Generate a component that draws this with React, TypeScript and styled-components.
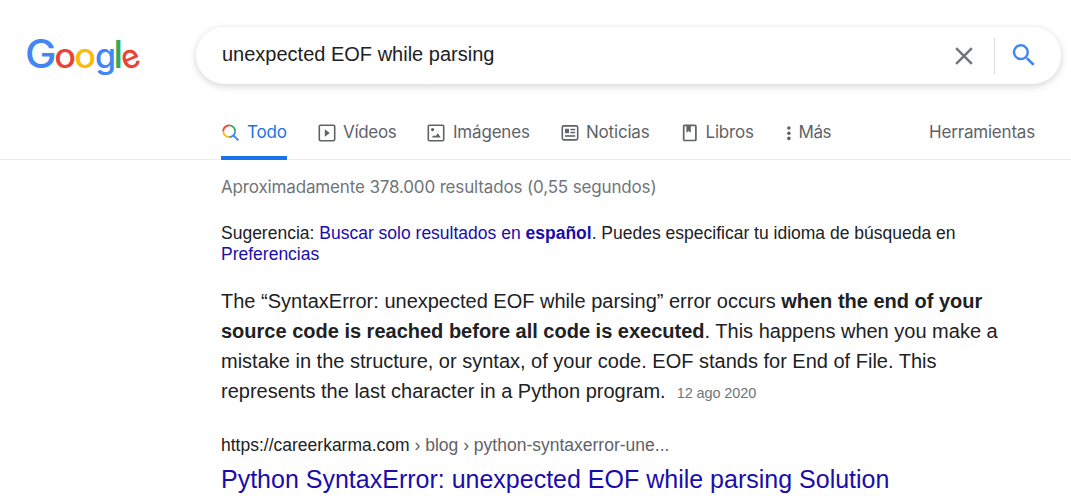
import React from 'react';
import styled, { createGlobalStyle, css } from 'styled-components';

const GlobalStyle = createGlobalStyle`
  * { box-sizing: border-box; }
  body {
    margin: 0;
    background: #fff;
    color: #202124;
    font-family: "Liberation Sans", Arial, sans-serif;
    overflow: hidden;
  }
`;

const Page = styled.div`
  width: 1071px;
  height: 496px;
  overflow: hidden;
`;

const Header = styled.header`
  height: 160px;
  border-bottom: 1px solid #ebebeb;
`;

const SearchRow = styled.div`
  display: flex;
  padding: 27px 10px 0 26px;
`;

const Logo = styled.svg`
  flex: none;
  width: 116px;
  height: 44px;
  margin: 7px 54px 0 0;
  overflow: visible;
  font-family: Inter, sans-serif;
`;

const SearchBox = styled.div`
  display: flex;
  align-items: center;
  flex: 1;
  height: 57px;
  padding: 0 22px 0 26px;
  border-radius: 29px;
  box-shadow: 0 2px 6px 1px rgba(64, 60, 67, 0.18);
  svg { flex: none; }
`;

const Query = styled.div`
  flex: 1;
  font-size: 20px;
  line-height: 24px;
  padding-bottom: 4px;
  color: #202124;
`;

const Divider = styled.div`
  width: 1px;
  height: 36px;
  margin: 0 14px 0 15.5px;
  background: #dadce0;
`;

const Tabs = styled.nav`
  display: flex;
  height: 60px;
  margin-top: 16px;
  padding: 0 36px 0 221px;
  font-family: Inter, sans-serif;
  font-size: 17px;
  line-height: 24px;
  color: #5f6368;
`;

const Tab = styled.div<{ $width: number; $gap: number; $spacing: number; $iconGap?: number; $active?: boolean }>`
  display: flex;
  align-items: flex-start;
  flex: none;
  width: ${p => p.$width}px;
  margin-right: ${p => p.$gap}px;
  padding-top: 20px;
  white-space: nowrap;
  letter-spacing: ${p => p.$spacing}px;
  svg { flex: none; margin: 4px ${p => p.$iconGap ?? 7}px 0 0; }
  ${p => p.$active && css`
    color: #1a73e8;
    border-bottom: 4px solid #1a73e8;
  `}
`;

const Tools = styled.div`
  margin-left: auto;
  padding-top: 20px;
  letter-spacing: -0.2px;
`;

const Results = styled.main`
  padding-left: 221px;
`;

const Stats = styled.div`
  padding-top: 15px;
  font-family: Inter, sans-serif;
  font-size: 17px;
  line-height: 24px;
  letter-spacing: -0.15px;
  color: #70757a;
`;

const Suggestion = styled.div`
  width: 760px;
  margin-top: 24px;
  font-size: 17.5px;
  line-height: 21px;
`;

const Link = styled.a`
  color: #1a0dab;
`;

const Snippet = styled.p`
  width: 800px;
  margin: 21px 0 0;
  font-size: 20px;
  line-height: 30px;
`;

const Line = styled.span`
  display: block;
  white-space: nowrap;
`;

const DateText = styled.span`
  margin-left: 11px;
  font-size: 14.5px;
  letter-spacing: -0.1px;
  color: #70757a;
`;

const Cite = styled.div`
  margin-top: 25px;
  font-size: 17.5px;
  line-height: 24px;
  span { color: #5f6368; }
`;

const Title = styled.h3`
  margin: 6px 0 0;
  font-size: 25px;
  line-height: 33px;
  font-weight: 400;
  color: #1a0dab;
  white-space: nowrap;
`;

const GoogleLogo = () => (
  <Logo viewBox="0 0 116 44" aria-label="Google">
    <g fontWeight="500" textAnchor="middle">
      <text fontSize="39" fill="#4285f4" transform="translate(14.8 34) scale(1.08 1)">G</text>
      <text fontSize="34" fontWeight="550" fill="#ea4335" transform="translate(39.2 34.2) scale(1.06 1)">o</text>
      <text fontSize="34" fontWeight="550" fill="#fbbc05" transform="translate(59.2 34.2) scale(1.06 1)">o</text>
      <text fontSize="34" fontWeight="550" fill="#4285f4" transform="translate(79.5 34.2)">g</text>
      <text fontSize="38" fontWeight="600" fill="#34a853" transform="translate(92.3 34) scale(.85 1)">l</text>
      <text y="9.1" fontSize="33" fontWeight="550" fill="#ea4335" transform="translate(104.5 24.8) rotate(-22) scale(.95 1)">e</text>
    </g>
  </Logo>
);

const CloseIcon = () => (
  <svg width="30" height="30" viewBox="0 0 24 24" fill="#70757a">
    <path d="M19 6.41L17.59 5 12 10.59 6.41 5 5 6.41 10.59 12 5 17.59 6.41 19 12 13.41 17.59 19 19 17.59 13.41 12z" />
  </svg>
);

const SearchIcon = () => (
  <svg width="30" height="30" viewBox="0 0 24 24" fill="#4285f4">
    <path transform="translate(0 -.6)" d="M15.5 14h-.79l-.28-.27A6.471 6.471 0 0 0 16 9.5 6.5 6.5 0 1 0 9.5 16c1.61 0 3.09-.59 4.23-1.57l.27.28v.79l5 4.99L20.49 19l-4.99-5zm-6 0C7.01 14 5 11.99 5 9.5S7.01 5 9.5 5 14 7.01 14 9.5 11.99 14 9.5 14z" />
  </svg>
);

const ColorSearchIcon = () => (
  <svg width="18" height="18" viewBox="0 0 18 18" fill="none" strokeWidth="1.8">
    <path d="M3 4.4A5.9 5.9 0 0 1 8.2 1.3" stroke="#ea4335" />
    <path d="M8.2 1.3A5.9 5.9 0 0 1 14.1 7.2" stroke="#34a853" />
    <path d="M14.1 7.2A5.9 5.9 0 0 1 8.2 13.1" stroke="#4285f4" />
    <path d="M8.2 13.1A5.9 5.9 0 0 1 2.3 7.2" stroke="#fbbc04" />
    <path d="M2.3 7.2A5.9 5.9 0 0 1 3.2 4" stroke="#ea4335" />
    <path d="M12.1 11.1L17.4 16.4" stroke="#4285f4" strokeWidth="2" />
  </svg>
);

const VideoIcon = () => (
  <svg width="18" height="18" viewBox="0 0 18 18">
    <rect x="1.3" y="1.3" width="15.4" height="15.4" rx="1.2" fill="none" stroke="#5f6368" strokeWidth="1.6" />
    <path d="M6.8 5.2v7.6l5-3.8z" fill="#5f6368" />
  </svg>
);

const ImageIcon = () => (
  <svg width="18" height="18" viewBox="0 0 18 18">
    <rect x="1.3" y="1.3" width="15.4" height="15.4" rx="1.2" fill="none" stroke="#5f6368" strokeWidth="1.6" />
    <circle cx="5.6" cy="5.6" r="1.6" fill="#5f6368" />
    <path d="M4.5 13.6l2.4-2.3 1.5 1 2.5-3 2.8 4.3z" fill="#5f6368" />
  </svg>
);

const NewsIcon = () => (
  <svg width="18" height="18" viewBox="0 0 18 18" fill="#5f6368">
    <rect x="1.3" y="1.9" width="15.4" height="14" rx="1.6" fill="none" stroke="#5f6368" strokeWidth="1.6" />
    <rect x="4" y="4.8" width="4" height="4.4" />
    <rect x="9.4" y="4.8" width="4.8" height="1.5" />
    <rect x="9.4" y="7.8" width="4.8" height="1.5" />
    <rect x="4" y="11.2" width="10.2" height="1.6" />
  </svg>
);

const BookIcon = () => (
  <svg width="17" height="18" viewBox="0 0 17 18">
    <rect x="2.7" y="1.3" width="12.2" height="15.2" rx="1" fill="none" stroke="#5f6368" strokeWidth="1.7" />
    <path d="M5.4 1.5h4.4v7.3L7.6 7 5.4 8.8z" fill="#5f6368" />
  </svg>
);

const DotsIcon = () => (
  <svg width="7" height="18" viewBox="0 0 7 18" fill="#5f6368">
    <circle cx="3.9" cy="4" r="1.8" />
    <circle cx="3.9" cy="9.2" r="1.8" />
    <circle cx="3.9" cy="14.4" r="1.8" />
  </svg>
);

export default function App() {
  return (
    <Page>
      <GlobalStyle />
      <Header>
        <SearchRow>
          <GoogleLogo />
          <SearchBox>
            <Query>unexpected EOF while parsing</Query>
            <CloseIcon />
            <Divider />
            <SearchIcon />
          </SearchBox>
        </SearchRow>
        <Tabs>
          <Tab $width={66} $gap={31} $spacing={-0.2} $iconGap={8} $active><ColorSearchIcon />Todo</Tab>
          <Tab $width={79} $gap={30} $spacing={-0.3}><VideoIcon />Vídeos</Tab>
          <Tab $width={103} $gap={31} $spacing={-0.2} $iconGap={8}><ImageIcon />Imágenes</Tab>
          <Tab $width={89} $gap={31} $spacing={-0.2}><NewsIcon />Noticias</Tab>
          <Tab $width={73} $gap={31} $spacing={-0.2} $iconGap={7.5}><BookIcon />Libros</Tab>
          <Tab $width={47} $gap={0} $spacing={-0.4} $iconGap={6.5}><DotsIcon />Más</Tab>
          <Tools>Herramientas</Tools>
        </Tabs>
      </Header>
      <Results>
        <Stats>Aproximadamente 378.000 resultados (0,55 segundos)</Stats>
        <Suggestion>
          <Line>Sugerencia: <Link>Buscar solo resultados en <b>español</b></Link>. Puedes especificar tu idioma de búsqueda en</Line>
          <Line><Link>Preferencias</Link></Line>
        </Suggestion>
        <Snippet>
          <Line>The “SyntaxError: unexpected EOF while parsing” error occurs <b>when the end of your</b></Line>
          <Line><b>source code is reached before all code is executed</b>. This happens when you make a</Line>
          <Line>mistake in the structure, or syntax, of your code. EOF stands for End of File. This</Line>
          <Line>represents the last character in a Python program.<DateText>12 ago 2020</DateText></Line>
        </Snippet>
        <Cite>https://careerkarma.com<span> › blog › python-syntaxerror-une...</span></Cite>
        <Title>Python SyntaxError: unexpected EOF while parsing Solution</Title>
      </Results>
    </Page>
  );
}
